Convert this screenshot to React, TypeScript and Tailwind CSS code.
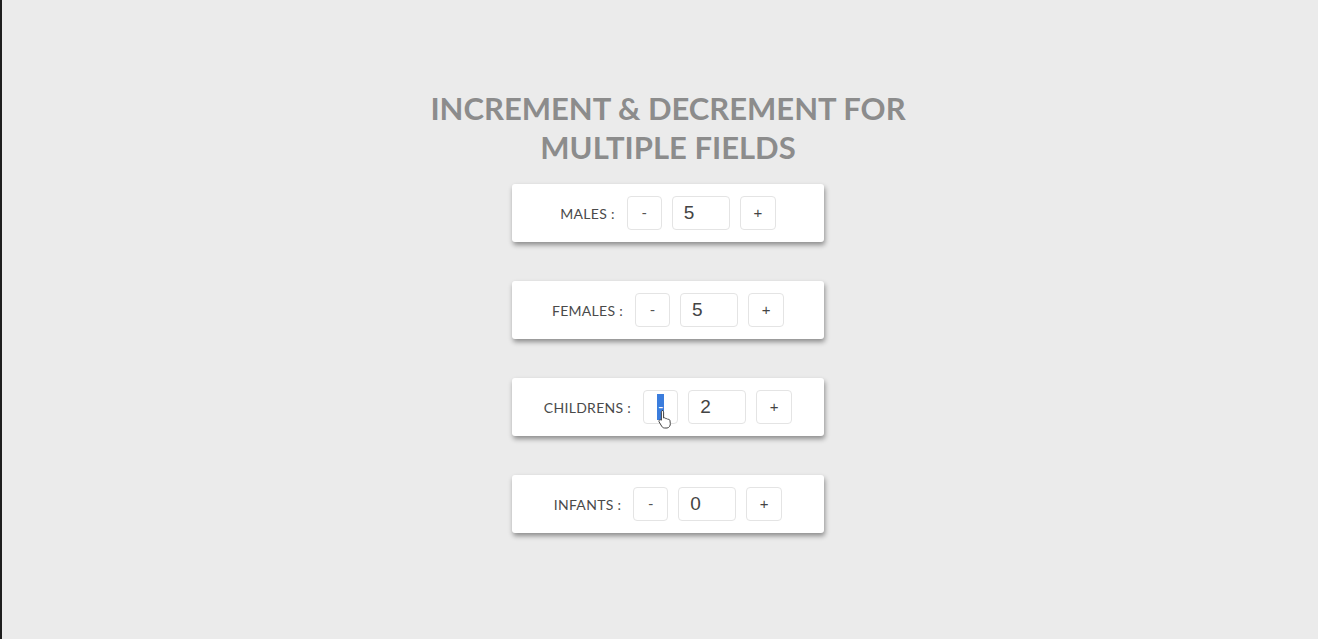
import { useState } from "react";

type Field = { key: string; label: string; value: number };

const initial: Field[] = [
  { key: "males", label: "MALES", value: 5 },
  { key: "females", label: "FEMALES", value: 5 },
  { key: "childrens", label: "CHILDRENS", value: 2 },
  { key: "infants", label: "INFANTS", value: 0 },
];

function Counter({
  field,
  selected,
  onChange,
}: {
  field: Field;
  selected?: boolean;
  onChange: (v: number) => void;
}) {
  return (
    <div className="flex h-[58px] w-[312px] items-center justify-center rounded-[3px] bg-white shadow-[1px_3px_5px_rgba(0,0,0,0.4)]">
      <span className="mr-[12px] text-[14px] tracking-[0.3px] text-[#4a4a4a] [font-family:Lato,'Liberation_Sans',sans-serif]">
        {field.label} :
      </span>
      <button
        onClick={() => onChange(Math.max(0, field.value - 1))}
        className="relative flex h-[34px] w-[35px] items-center justify-center rounded-[4px] border border-[#e4e4e4] bg-white text-[15px] text-[#555] [font-family:'Liberation_Sans',sans-serif]"
      >
        {selected ? (
          <>
            <span className="bg-[#3b7ddd] px-[1px] leading-[26px] text-white">-</span>
            <svg
              className="absolute left-[13px] top-[18px]"
              width="16"
              height="20"
              viewBox="0 0 16 20"
            >
              <path
                d="M5 1.5c1 0 1.6.7 1.6 1.6V9l.3-.1c.8-.3 1.7.1 2 .9.7-.4 1.6-.1 2 .6.8-.3 1.7.1 2 .9l.4 3.2c.2 2-1 4.2-3.2 4.5H7.6c-1.2 0-2.200-.6-2.8-1.6L2.1 12.9c-.4-.7-.2-1.6.6-2 .6-.3 1.3-.2 1.7.3V3.1c0-.9.6-1.6 1.6-1.6z"
                fill="#fff"
                stroke="#444"
                strokeWidth="1"
              />
            </svg>
          </>
        ) : (
          "-"
        )}
      </button>
      <input
        value={field.value}
        readOnly
        className="mx-[10px] h-[34px] w-[58px] rounded-[4px] border border-[#e4e4e4] bg-white pl-[11px] text-[19px] text-[#444] outline-none [font-family:'Liberation_Sans',sans-serif]"
      />
      <button
        onClick={() => onChange(field.value + 1)}
        className="flex h-[34px] w-[36px] items-center justify-center rounded-[4px] border border-[#e4e4e4] bg-white text-[15px] text-[#444] [font-family:'Liberation_Sans',sans-serif]"
      >
        +
      </button>
    </div>
  );
}

export default function App() {
  const [fields, setFields] = useState(initial);

  const update = (key: string, v: number) =>
    setFields((fs) => fs.map((f) => (f.key === key ? { ...f, value: v } : f)));

  return (
    <div className="flex h-[639px] w-full flex-col items-center overflow-hidden border-l-2 border-[#1e1e1e] bg-[#ebebeb] pl-[16px]">
      <h1 className="mt-[89px] text-center text-[31px] font-bold leading-[39px] text-[#8c8c8c] [font-family:Lato,'Liberation_Sans',sans-serif]">
        INCREMENT &amp; DECREMENT FOR
        <br />
        MULTIPLE FIELDS
      </h1>
      <div className="mt-[17px] flex flex-col gap-[39px]">
        {fields.map((f) => (
          <Counter
            key={f.key}
            field={f}
            selected={f.key === "childrens"}
            onChange={(v) => update(f.key, v)}
          />
        ))}
      </div>
    </div>
  );
}
